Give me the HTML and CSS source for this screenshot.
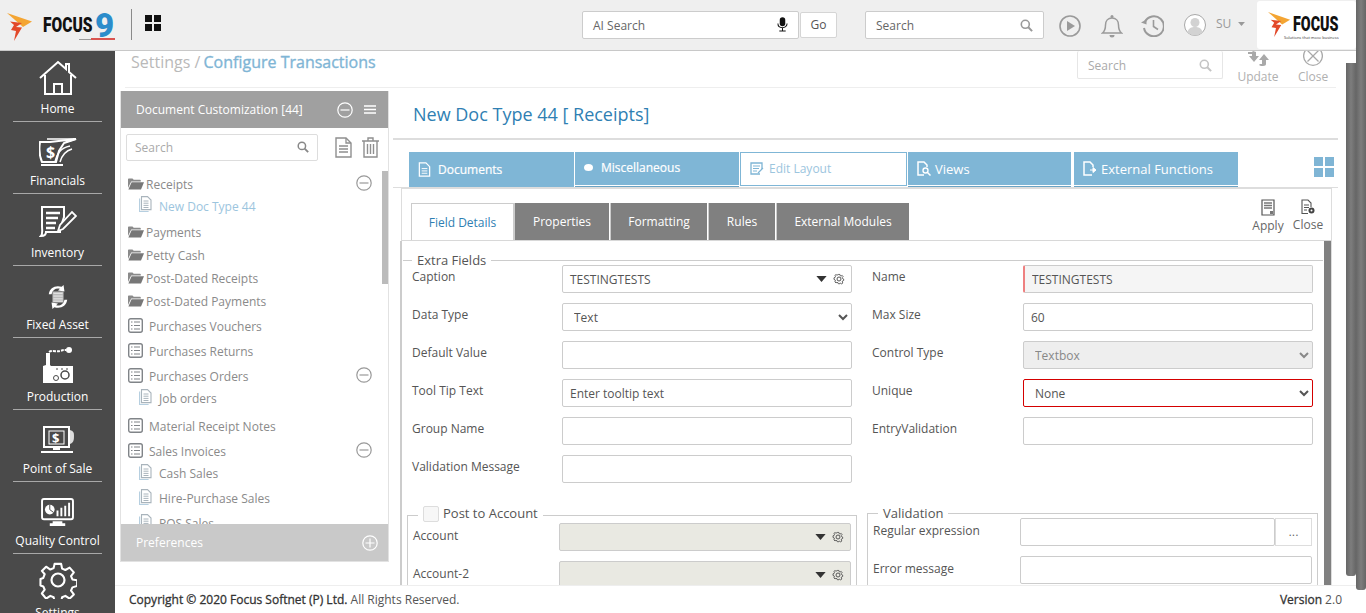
FILE: index.html
```html
<!DOCTYPE html>
<html lang="en">

<head>
  <meta charset="UTF-8">
  <meta name="viewport" content="width=device-width, initial-scale=1.0">
  <title>Configure Transactions</title>
  <link rel="stylesheet" href="styles.css">
</head>

<body>
  <svg class="sprites" width="0" height="0">
    <symbol id="i-gear" viewBox="0 0 12 12">
      <path d="M5 1h2l.3 1.4 1.2.5 1.200-.8 1.100 1.400-.9 1.100.3 1.300 1.300.6v1.700l-1.300.5-.4 1.200.8 1.200-1.400 1.200-1.100-.9-1.200.5L7 12H5l-.3-1.200-1.200-.5-1.100.8L1 9.800l.8-1.100-.5-1.200L0 7V5l1.300-.4.500-1.200-.8-1.100 1.400-1.200 1.100.8 1.200-.5z" transform="translate(1 .6) scale(.84)" fill="none" stroke="currentColor" stroke-width="1.100"/>
      <circle cx="6" cy="6" r="2" fill="none" stroke="currentColor"/>
    </symbol>
    <symbol id="i-folder" viewBox="0 0 16 12">
      <path d="M0 1.500C0 .8.500.5 1 .5h3.500l1.200 1.300h6.300c.5 0 .8.300.8.800V3.500H3.200L0 10z" fill="#8a8a8a"/>
      <path d="M3.600 4.300H16l-3 7.200H.4z" fill="#777"/>
    </symbol>
    <symbol id="i-list" viewBox="0 0 15 15">
      <rect x=".7" y=".7" width="13.600" height="13.600" rx="2" fill="none" stroke="#808488" stroke-width="1.400"/>
      <path d="M3 4h1.500M3 7.500h1.500M3 11h1.500M6 4h6M6 7.500h6M6 11h6" stroke="#808488" stroke-width="1.200"/>
    </symbol>
    <symbol id="i-page" viewBox="0 0 13 16">
      <path d="M.6 2.500v13h9" fill="none" stroke="#b6cfe0" stroke-width="1.200"/>
      <path d="M2.500.6h6l3.500 3.500v9.500H2.500z" fill="#fff" stroke="#a9b4bc" stroke-width="1.100"/>
      <path d="M4.500 5h5M4.500 7.200h5M4.500 9.400h5M4.500 11.500h5" stroke="#a9b4bc"/>
    </symbol>
    <symbol id="i-minus" viewBox="0 0 16 16">
      <circle cx="8" cy="8" r="7.200" fill="none" stroke="currentColor" stroke-width="1.200"/>
      <path d="M3.500 8h9" stroke="currentColor" stroke-width="1.200"/>
    </symbol>
    <symbol id="i-search" viewBox="0 0 13 13">
      <circle cx="5.300" cy="5.300" r="4" fill="none" stroke="currentColor" stroke-width="1.600"/>
      <path d="M8.300 8.300l3.800 3.800" stroke="currentColor" stroke-width="2"/>
    </symbol>
    <symbol id="i-caret" viewBox="0 0 12 7">
      <path d="M0 0h12L6 7z" fill="currentColor"/>
    </symbol>
  </svg>

  <div class="page">
    <div class="app">
      <header class="topbar">
        <div class="brand">
          <svg class="brand-flame" viewBox="0 0 26 28" width="26" height="28">
            <path d="M0 0l25 8.500-9 5.500z" fill="#f4a533"/>
            <path d="M3 8.500l12 1.500-6 4 6 .5L7 28l2-10-5-1 3-5z" fill="#e2492a"/>
          </svg>
          <span class="brand-word">FOCUS</span>
          <span class="brand-nine">9</span>
          <svg class="brand-tag" width="36" height="3"><rect x="0" y="1" width="12" height="1" fill="#999"/><rect x="12" y="0" width="24" height="2" fill="#d9534f"/></svg>
        </div>
        <span class="topbar-rule"></span>
        <svg class="apps-icon" viewBox="0 0 16 16" width="16" height="16">
          <path d="M0 0h7v7H0zM9 0h7v7H9zM0 9h7v7H0zM9 9h7v7H9z" fill="#111"/>
        </svg>

        <div class="ai-search">
          <span>AI Search</span>
          <svg viewBox="0 0 12 16" width="11" height="15">
            <rect x="3" y="0" width="6" height="10" rx="3" fill="#111"/>
            <path d="M1 7c0 6 10 6 10 0M6 12v2.500M2.500 15h7" fill="none" stroke="#111" stroke-width="1.100"/>
          </svg>
        </div>
        <button class="go-btn">Go</button>

        <div class="top-search">
          <span>Search</span>
          <svg width="13" height="13"><use href="#i-search"/></svg>
        </div>

        <svg class="top-icon top-play" viewBox="0 0 22 22" width="22" height="22">
          <circle cx="11" cy="11" r="10" fill="none" stroke="#9a9a9a" stroke-width="1.600"/>
          <path d="M8 6l8 5-8 5z" fill="#9a9a9a"/>
        </svg>
        <svg class="top-icon top-bell" viewBox="0 0 22 24" width="22" height="24">
          <path d="M1.500 19c2.500-2 3-4 3-8 0-4 2.500-7 6.500-7s6.500 3 6.500 7c0 4 .5 6 3 8z" fill="none" stroke="#9a9a9a" stroke-width="1.500"/>
          <circle cx="11" cy="2.500" r="1.500" fill="#9a9a9a"/>
          <path d="M8.500 21a2.500 2.500 0 0 0 5 0" fill="#9a9a9a"/>
        </svg>
        <svg class="top-icon top-history" viewBox="0 0 23 22" width="23" height="22">
          <path d="M3.800 7A10 10 0 1 1 3 13" fill="none" stroke="#9a9a9a" stroke-width="2"/>
          <path d="M0 7.500l5.500-3v5z" fill="#9a9a9a"/>
          <path d="M12.500 5v6.500l4.500 3" fill="none" stroke="#9a9a9a" stroke-width="1.600"/>
        </svg>
        <svg class="top-icon top-avatar" viewBox="0 0 22 22" width="22" height="22">
          <circle cx="11" cy="11" r="10.500" fill="#fff" stroke="#a8a8a8"/>
          <circle cx="11" cy="8.500" r="4.500" fill="#d2d2d2"/>
          <path d="M3.500 18c1-4 4-5 7.500-5s6.500 1 7.500 5a10 10 0 0 1-15 0z" fill="#d2d2d2"/>
        </svg>
        <span class="user-name">SU</span>
        <svg class="user-caret" width="7" height="4"><use href="#i-caret"/></svg>

        <div class="client-logo">
          <svg viewBox="0 0 26 28" width="23" height="25">
            <path d="M0 0l25 8.500-9 5.500z" fill="#f4a533"/>
            <path d="M3 8.500l12 1.500-6 4 6 .5L7 28l2-10-5-1 3-5z" fill="#e2492a"/>
          </svg>
          <div class="client-logo-text">
            <span class="client-word">FOCUS</span>
            <span class="client-tag">Solutions that move business</span>
          </div>
        </div>
      </header>

      <div class="app-body">
        <nav class="sidebar">
          <a class="nav-item">
            <svg viewBox="0 0 38 36" width="38" height="36"><path d="M1 18L19 2l8 7V4h3v8l7 6M6 15v19h9V24h8v10h9V15M15 34h8" fill="none" stroke="#fff" stroke-width="2"/></svg>
            <span>Home</span>
          </a>
          <a class="nav-item">
            <svg viewBox="0 0 38 30" width="38" height="30"><path d="M1 5h10l26-3-12 4-5 8-3 11H3C0 18 0 11 1 5z" fill="none" stroke="#fff" stroke-width="2"/><path d="M8 2l29 0-10 3M16 25c2-8 5-14 15-16M21 25c2-7 5-11 12-13" fill="none" stroke="#fff" stroke-width="1.500"/><path d="M2 28h22" stroke="#fff" stroke-width="2"/><text class="nav-dollar" x="7" y="21">$</text></svg>
            <span>Financials</span>
          </a>
          <a class="nav-item">
            <svg viewBox="0 0 38 34" width="38" height="34"><path d="M3 2h22v10l-4 12v3H7c0 3-2 4-5 4 2-2 1-6 1-10z" fill="none" stroke="#fff" stroke-width="2"/><path d="M7 8h14M7 13h12M7 18h10M7 23h9" stroke="#fff" stroke-width="2.400"/><path d="M19 26l2-6L33 7l4 4-13 13z" fill="#4a4a4a" stroke="#fff" stroke-width="1.800"/></svg>
            <span>Inventory</span>
          </a>
          <a class="nav-item">
            <svg viewBox="0 0 26 30" width="24" height="28"><path d="M3 12C4 5 10 2 17 4l2-2 1 7-7-1 2-2C11 5 7 7 6 12zM23 18c-1 7-7 10-14 8l-2 2-1-7 7 1-2 2c4 1 8-1 9-6z" fill="#fff"/><rect x="7" y="9" width="12" height="12" fill="#bbb"/><path d="M8 11h10M8 14h10M8 17h10M8 19.500h10" stroke="#eee"/></svg>
            <span>Fixed Asset</span>
          </a>
          <a class="nav-item">
            <svg viewBox="0 0 30 36" width="30" height="36"><path d="M3 6h4v14H3z" fill="#fff"/><path d="M6 5c3-2 8 0 11-1s4-1 6-1" fill="none" stroke="#fff" stroke-width="2" stroke-dasharray="3 1"/><circle cx="26" cy="3" r="3" fill="#fff"/><path d="M0 19l3-1h4l1 1h22v17H0z" fill="#fff"/><path d="M13 22h2M18 22h2M23 22h2" stroke="#4a4a4a"/><circle cx="22" cy="28" r="4" fill="none" stroke="#4a4a4a" stroke-width="1.500"/><circle cx="13" cy="31" r="2.500" fill="none" stroke="#4a4a4a"/></svg>
            <span>Production</span>
          </a>
          <a class="nav-item">
            <svg viewBox="0 0 36 30" width="36" height="30"><rect x="4" y="2" width="25" height="20" fill="none" stroke="#fff" stroke-width="2"/><path d="M30 5c3 1 4 2 4 6 0 5-1 7-4 8z" fill="#ddd"/><path d="M13 22h7v3h-7zM1 26h32v2H1z" fill="#fff"/><text class="nav-dollar nav-dollar--dark" x="12" y="18">$</text><rect x="9" y="6" width="15" height="13" fill="none" stroke="#fff"/></svg>
            <span>Point of Sale</span>
          </a>
          <a class="nav-item">
            <svg viewBox="0 0 34 30" width="33" height="29"><rect x="1" y="1" width="32" height="21" rx="2" fill="none" stroke="#fff" stroke-width="2"/><path d="M12 24h10v2h3v3H9v-3h3z" fill="#fff"/><circle cx="9" cy="12" r="5" fill="#fff"/><path d="M9 12V7M9 12l4 3" stroke="#4a4a4a"/><path d="M16 13h2v6h-2zM20 10h2v9h-2zM24 8h2v11h-2zM28 5h2v14h-2z" fill="#fff"/></svg>
            <span>Quality Control</span>
          </a>
          <a class="nav-item">
            <svg viewBox="0 0 38 38" width="38" height="38"><path d="M15.500 2h7l1 5 3.500 1.500 4.500-2.500 4.500 5-3 4 1.500 3.500 5 1v6l-5 1.500-1.500 3.500 3 4-4.500 4.500-4.500-3-3.500 1.500-1 5h-7l-1-5-3.500-1.500-4.500 3L2 33.500l3-4-1.500-3.500-3-1v-7l3-1L5 13 2 9.500 6.500 5l4.500 3 3.500-1.500z" transform="translate(1 1) scale(.94)" fill="none" stroke="#fff" stroke-width="2.200" stroke-linejoin="round"/><circle cx="19" cy="19" r="6.500" fill="none" stroke="#fff" stroke-width="2.200"/></svg>
            <span>Settings</span>
          </a>
        </nav>

        <div class="content">
          <div class="content-main">
            <div class="crumb-bar">
              <div class="crumbs">Settings / <b>Configure Transactions</b></div>
              <div class="crumb-search">
                <span>Search</span>
                <svg width="13" height="13"><use href="#i-search"/></svg>
              </div>
              <div class="crumb-action crumb-update">
                <svg viewBox="0 0 22 16" width="22" height="16"><path d="M1 1h4l1-1 3 1v4h3L7 11 2 5h3V3H1zM16 15c-1 0-3 0-4-1l1-1h2V9h-3l5-6 5 6h-3v4c0 1-1 2-3 2z" fill="#a9a9a9"/></svg>
                <span>Update</span>
              </div>
              <div class="crumb-action crumb-close">
                <svg viewBox="0 0 20 20" width="20" height="20"><circle cx="10" cy="6" r="9.400" fill="none" stroke="#a9a9a9" stroke-width="1.300"/><path d="M4.500 .5l11 11M15.500 .5l-11 11" stroke="#a9a9a9" stroke-width="1.300"/></svg>
                <span>Close</span>
              </div>
            </div>

            <div class="workspace">
              <aside class="tree-panel">
                <div class="tree-head">
                  <span>Document Customization [44]</span>
                  <svg class="tree-head-minus" width="16" height="16"><use href="#i-minus"/></svg>
                  <svg class="tree-head-menu" viewBox="0 0 12 9" width="12" height="9"><path d="M0 1h12M0 4.500h12M0 8h12" stroke="#fff" stroke-width="1.500"/></svg>
                </div>
                <div class="tree-tools">
                  <div class="tree-search">
                    <span>Search</span>
                    <svg width="12" height="12"><use href="#i-search"/></svg>
                  </div>
                  <svg class="tool-doc" viewBox="0 0 17 21" width="17" height="21"><path d="M1 1h10l5 5v14H1z" fill="none" stroke="#8f8f8f" stroke-width="1.400"/><path d="M11 1v5h5M4 9h9M4 12h9M4 15h9" fill="none" stroke="#8f8f8f" stroke-width="1.300"/></svg>
                  <svg class="tool-trash" viewBox="0 0 17 21" width="17" height="21"><path d="M0 4h17M6 4V1h5v3M2 4v16h13V4M5.500 7v10M8.500 7v10M11.500 7v10" fill="none" stroke="#8f8f8f" stroke-width="1.400"/></svg>
                </div>
                <div class="tree">
                  <div class="tree-thumb"></div>
                  <div class="row row-folder row-first"><svg width="16" height="12"><use href="#i-folder"/></svg>Receipts<svg class="row-minus" width="16" height="16"><use href="#i-minus"/></svg></div>
                  <div class="row row-sub row-current"><svg width="13" height="16"><use href="#i-page"/></svg>New Doc Type 44</div>
                  <div class="row row-folder"><svg width="16" height="12"><use href="#i-folder"/></svg>Payments</div>
                  <div class="row row-folder"><svg width="16" height="12"><use href="#i-folder"/></svg>Petty Cash</div>
                  <div class="row row-folder"><svg width="16" height="12"><use href="#i-folder"/></svg>Post-Dated Receipts</div>
                  <div class="row row-folder"><svg width="16" height="12"><use href="#i-folder"/></svg>Post-Dated Payments</div>
                  <div class="row row-doc row-doc-first"><svg width="15" height="15"><use href="#i-list"/></svg>Purchases Vouchers</div>
                  <div class="row row-doc"><svg width="15" height="15"><use href="#i-list"/></svg>Purchases Returns</div>
                  <div class="row row-doc"><svg width="15" height="15"><use href="#i-list"/></svg>Purchases Orders<svg class="row-minus" width="16" height="16"><use href="#i-minus"/></svg></div>
                  <div class="row row-sub"><svg width="13" height="16"><use href="#i-page"/></svg>Job orders</div>
                  <div class="row row-doc"><svg width="15" height="15"><use href="#i-list"/></svg>Material Receipt Notes</div>
                  <div class="row row-doc"><svg width="15" height="15"><use href="#i-list"/></svg>Sales Invoices<svg class="row-minus" width="16" height="16"><use href="#i-minus"/></svg></div>
                  <div class="row row-sub"><svg width="13" height="16"><use href="#i-page"/></svg>Cash Sales</div>
                  <div class="row row-sub"><svg width="13" height="16"><use href="#i-page"/></svg>Hire-Purchase Sales</div>
                  <div class="row row-sub"><svg width="13" height="16"><use href="#i-page"/></svg>POS Sales</div>
                </div>
                <div class="tree-foot">
                  <span>Preferences</span>
                  <svg viewBox="0 0 16 16" width="16" height="16"><circle cx="8" cy="8" r="7.200" fill="none" stroke="#fff" stroke-width="1.200"/><path d="M3.500 8h9M8 3.500v9" stroke="#fff" stroke-width="1.200"/></svg>
                </div>
              </aside>

              <section class="editor">
                <h1 class="doc-title">New Doc Type 44 [ Receipts]</h1>

                <div class="main-tabs">
                  <div class="main-tab main-tab--tall">
                    <svg viewBox="0 0 13 16" width="13" height="15"><path d="M1 1h7l4 4v10H1z" fill="none" stroke="#fff" stroke-width="1.300"/><path d="M3.500 7h6M3.500 9.500h6M3.500 12h6" stroke="#fff"/></svg>
                    Documents
                  </div>
                  <div class="main-tab main-tab--misc">
                    <svg viewBox="0 0 9 7" width="9" height="7"><ellipse cx="4.500" cy="3.500" rx="4.500" ry="3.500" fill="#fff"/></svg>
                    Miscellaneous
                  </div>
                  <div class="main-tab main-tab--open">
                    <svg viewBox="0 0 14 13" width="14" height="13"><path d="M10 12H1V1h11v6" fill="none" stroke="#7fb5d5" stroke-width="1.300"/><path d="M3 4h7M3 6.500h6M3 9h4M8 11l5-5" stroke="#7fb5d5" stroke-width="1.200"/></svg>
                    Edit Layout
                  </div>
                  <div class="main-tab main-tab--views">
                    <svg viewBox="0 0 14 15" width="14" height="15"><path d="M7 14H1V1h6l3 3v2" fill="none" stroke="#fff" stroke-width="1.500"/><circle cx="8.500" cy="9.500" r="2.500" fill="none" stroke="#fff" stroke-width="1.400"/><path d="M10.500 11.500l3 3" stroke="#fff" stroke-width="1.500"/></svg>
                    Views
                  </div>
                  <div class="main-tab main-tab--ext">
                    <svg viewBox="0 0 14 15" width="14" height="15"><path d="M9 14H1V1h6l3 3v2" fill="none" stroke="#fff" stroke-width="1.500"/><path d="M7 9h5M10 6.500L13 9l-3 2.500z" fill="#fff" stroke="#fff"/></svg>
                    External Functions
                  </div>
                  <svg class="layout-toggle" viewBox="0 0 20 20" width="20" height="20"><path d="M0 0h9v9H0zM11 0h9v9h-9zM0 11h9v9H0zM11 11h9v9h-9z" fill="#7fb5d5"/></svg>
                </div>

                <div class="card">
                  <div class="sub-bar">
                    <div class="sub-tab sub-tab--on">Field Details</div>
                    <div class="sub-tab sub-tab--props">Properties</div>
                    <div class="sub-tab sub-tab--format">Formatting</div>
                    <div class="sub-tab sub-tab--rules">Rules</div>
                    <div class="sub-tab sub-tab--modules">External Modules</div>
                    <div class="sub-action sub-apply">
                      <svg viewBox="0 0 14 17" width="14" height="17"><path d="M1 1h12v15H1z" fill="none" stroke="#555" stroke-width="1.200"/><path d="M3 4h8M3 6.500h8M3 9h8" stroke="#777" stroke-width="1.400"/><path d="M9 12h3v3H9z" fill="#777"/></svg>
                      <span>Apply</span>
                    </div>
                    <div class="sub-action sub-close">
                      <svg viewBox="0 0 14 16" width="14" height="16"><path d="M7 14.500H1V1h6l3 3v4" fill="none" stroke="#555" stroke-width="1.100"/><path d="M3 6h5M3 8.500h5M3 11h3" stroke="#555"/><circle cx="10.500" cy="11.500" r="3" fill="#444"/><circle cx="10.500" cy="11.500" r="1" fill="#fff"/></svg>
                      <span>Close</span>
                    </div>
                  </div>

                  <div class="card-body">
                    <div class="card-thumb"></div>
                    <fieldset class="extra-fields">
                      <legend>Extra Fields</legend>
                      <div class="field-grid">
                        <label>Caption</label>
                        <div class="combo">
                          <span>TESTINGTESTS</span>
                          <svg class="combo-caret" width="11" height="6"><use href="#i-caret"/></svg>
                          <svg class="combo-gear" width="12" height="12"><use href="#i-gear"/></svg>
                        </div>
                        <label>Name</label>
                        <input class="ctl ctl-locked" value="TESTINGTESTS" readonly>

                        <label>Data Type</label>
                        <select class="ctl"><option>Text</option></select>
                        <label>Max Size</label>
                        <input class="ctl" value="60">

                        <label>Default Value</label>
                        <input class="ctl">
                        <label>Control Type</label>
                        <select class="ctl ctl-off" disabled><option>Textbox</option></select>

                        <label>Tool Tip Text</label>
                        <input class="ctl" value="Enter tooltip text">
                        <label>Unique</label>
                        <select class="ctl ctl-alert"><option>None</option></select>

                        <label>Group Name</label>
                        <input class="ctl">
                        <label>EntryValidation</label>
                        <input class="ctl">

                        <label>Validation Message</label>
                        <input class="ctl">
                      </div>
                    </fieldset>

                    <div class="lower-sets">
                      <fieldset class="post-set">
                        <legend><span class="fake-check"></span><span class="post-title">Post to Account</span></legend>
                        <div class="lower-row lower-row--first">
                          <label>Account</label>
                          <div class="combo combo-off">
                            <svg class="combo-caret" width="11" height="6"><use href="#i-caret"/></svg>
                            <svg class="combo-gear" width="12" height="12"><use href="#i-gear"/></svg>
                          </div>
                        </div>
                        <div class="lower-row">
                          <label>Account-2</label>
                          <div class="combo combo-off">
                            <svg class="combo-caret" width="11" height="6"><use href="#i-caret"/></svg>
                            <svg class="combo-gear" width="12" height="12"><use href="#i-gear"/></svg>
                          </div>
                        </div>
                      </fieldset>
                      <fieldset class="valid-set">
                        <legend>Validation</legend>
                        <div class="valid-row">
                          <label>Regular expression</label>
                          <input class="ctl">
                          <button class="dots-btn">...</button>
                        </div>
                        <div class="valid-row">
                          <label>Error message</label>
                          <input class="ctl">
                        </div>
                      </fieldset>
                    </div>
                  </div>
                </div>
              </section>
            </div>
          </div>

          <footer class="footer">
            <div><b>Copyright © 2020 Focus Softnet (P) Ltd.</b> All Rights Reserved.</div>
            <div><b>Version</b> 2.0</div>
          </footer>
        </div>

        <div class="inner-scroll"><span></span></div>
      </div>
    </div>

    <div class="outer-scroll"><span></span></div>
  </div>
</body>

</html>
```

FILE: styles.css
```css
* {
  box-sizing: border-box;
}

html,
body {
  height: 613px;
  margin: 0;
  overflow: hidden;
}

body {
  background: #fff;
  color: #555;
  font-family: "Open Sans", sans-serif;
  font-size: 12px;
}

.sprites {
  display: block;
  height: 0;
}

.page {
  display: flex;
  height: 613px;
  width: 1366px;
}

.app {
  display: flex;
  flex-direction: column;
  height: 613px;
  width: 1356px;
}

.outer-scroll,
.inner-scroll {
  background: #fff;
  display: flex;
  flex-direction: column;
  flex: none;
  width: 10px;
}

.outer-scroll span {
  background: linear-gradient(90deg, #666, #7d7d7d 50%, #666);
  border-radius: 0 0 3px 3px;
  display: block;
  height: 590px;
}

.inner-scroll {
  height: 525px;
  padding-top: 12px;
}

.inner-scroll span {
  background: linear-gradient(90deg, #666, #7d7d7d 50%, #666);
  border-radius: 0 0 3px 3px;
  display: block;
  flex: 1;
}

/* top bar */
.topbar {
  align-items: center;
  background: #efefef;
  border-bottom: 1px solid #c8c8c8;
  display: flex;
  flex: none;
  height: 51px;
  position: relative;
}

.brand {
  align-items: center;
  display: flex;
  flex: none;
  height: 50px;
  padding-left: 7px;
  position: relative;
  width: 131px;
}

.brand-flame {
  flex: none;
  margin-top: 3px;
}

.brand-word {
  color: #111;
  display: inline-block;
  font-family: Roboto, sans-serif;
  font-size: 21px;
  font-weight: 900;
  margin-left: 10px;
  transform: scaleX(.74);
  transform-origin: left center;
  width: 53px;
}

.brand-nine {
  color: #2b8ccb;
  font-family: Roboto, sans-serif;
  font-size: 33px;
  font-weight: 900;
  line-height: 30px;
  margin-top: 1px;
  margin-left: -1px;
}

.brand-tag {
  bottom: 9px;
  left: 79px;
  position: absolute;
}

.topbar-rule {
  background: #8a8a8a;
  flex: none;
  height: 31px;
  margin-top: -1px;
  width: 1px;
}

.apps-icon {
  flex: none;
  margin-left: 13px;
  margin-top: -5px;
}

.ai-search,
.top-search {
  align-items: center;
  background: #fff;
  border: 1px solid #ccc;
  border-radius: 2px;
  color: #666;
  display: flex;
  flex: none;
  font-size: 12px;
  height: 28px;
  justify-content: space-between;
  margin-top: -1px;
}

.ai-search span,
.top-search span {
  margin-top: 2px;
}

.ai-search {
  margin-left: 421px;
  padding: 0 10px 0 10px;
  width: 217px;
}

.go-btn {
  background: #fff;
  border: 1px solid #d5d5d5;
  border-radius: 2px;
  color: #555;
  flex: none;
  font-family: inherit;
  font-size: 12px;
  height: 26px;
  margin-left: 1px;
  margin-top: -1px;
  padding: 0;
  width: 37px;
}

.top-search {
  margin-left: 28px;
  padding: 0 10px;
  width: 179px;
}

.top-search svg {
  color: #999;
  margin-top: 2px;
}

.top-icon {
  flex: none;
  margin-top: 1px;
}

.top-play {
  margin-left: 15px;
}

.top-bell {
  margin-left: 20px;
}

.top-history {
  margin-left: 18px;
}

.top-avatar {
  margin-left: 20px;
  margin-top: -1px;
}

.user-name {
  color: #999;
  flex: none;
  margin-left: 10px;
  margin-top: -4px;
}

.user-caret {
  color: #999;
  flex: none;
  margin-left: 7px;
  margin-top: -2px;
}

.client-logo {
  align-items: center;
  background: #fff;
  border-radius: 3px;
  display: flex;
  flex: none;
  height: 48px;
  margin-left: auto;
  padding: 0 0 0 11px;
  width: 99px;
}

.client-logo svg {
  flex: none;
  margin-top: -2px;
}

.client-logo-text {
  display: flex;
  flex-direction: column;
  margin-left: 2px;
  margin-top: 2px;
  min-width: 0;
}

.client-word {
  color: #111;
  display: inline-block;
  font-family: Roboto, sans-serif;
  font-size: 21px;
  font-weight: 900;
  line-height: 22px;
  transform: scaleX(.68);
  transform-origin: left center;
  width: 50px;
}

.client-tag {
  color: #333;
  font-size: 4px;
  line-height: 5px;
  margin-left: -9px;
  white-space: nowrap;
}

/* left nav */
.app-body {
  display: flex;
  flex: 1;
  min-height: 0;
}

.sidebar {
  background: #4a4a4a;
  flex: none;
  height: 562px;
  overflow: hidden;
  width: 115px;
}

.nav-item {
  align-items: center;
  color: #fff;
  display: flex;
  flex-direction: column;
  height: 72px;
  justify-content: flex-end;
  margin: 0 13px;
  padding-bottom: 5px;
  position: relative;
  white-space: nowrap;
}

.nav-item::after {
  background: #a8a8a8;
  bottom: 0;
  content: "";
  height: 1px;
  left: 0;
  position: absolute;
  right: 0;
}

.nav-item span {
  line-height: 17px;
}

.nav-item svg {
  flex: none;
  margin-bottom: 5px;
}

.nav-item:first-child {
  height: 71px;
}

.nav-item:first-child svg {
  margin-bottom: 4px;
}

.nav-item:last-child::after {
  display: none;
}

.nav-dollar {
  fill: #fff;
  font-family: "Open Sans", sans-serif;
  font-size: 16px;
  font-weight: 700;
}

.nav-dollar--dark {
  font-size: 13px;
}

/* content */
.content {
  display: flex;
  flex: 1;
  flex-direction: column;
  min-width: 0;
}

.content-main {
  flex: none;
  height: 534px;
  overflow: hidden;
}

.crumb-bar {
  align-items: flex-start;
  border-bottom: 1px solid #eee;
  display: flex;
  height: 37px;
  margin: 0 10px;
  position: relative;
}

.crumbs {
  color: #b9b9b9;
  font-size: 16px;
  line-height: 22px;
  margin-left: 6px;
  width: 946px;
}

.crumbs b {
  color: #7fb5d5;
  font-weight: 500;
  margin-left: -1px;
  -webkit-text-stroke: .35px #7fb5d5;
}

.crumb-search {
  align-items: center;
  border: 1px solid #e6e6e6;
  border-radius: 2px;
  border-top: 0;
  color: #aaa;
  display: flex;
  flex: none;
  height: 28px;
  justify-content: space-between;
  padding: 2px 10px 0;
  width: 146px;
}

.crumb-search svg {
  color: #c4c4c4;
}

.crumb-action {
  color: #b0b0b0;
  display: flex;
  flex: none;
  flex-direction: column;
  align-items: center;
  height: 36px;
}

.crumb-action span {
  line-height: 16px;
}

.crumb-action svg {
  margin-bottom: 2px;
  flex: none;
}

.crumb-update {
  margin-left: 15px;
  width: 40px;
}

.crumb-close {
  margin-left: 20px;
  margin-top: -1px;
  width: 30px;
}

.crumb-close svg {
  margin-bottom: -1px;
}

.workspace {
  display: flex;
  padding: 3px 0 0 5px;
}

/* tree */
.tree-panel {
  border: 1px solid #e2e2e2;
  border-top: 0;
  flex: none;
  height: 471px;
  width: 269px;
}

.tree-head,
.tree-foot {
  align-items: center;
  color: #fff;
  display: flex;
  height: 37px;
  padding-left: 15px;
}

.tree-head {
  background: #a0a0a0;
}

.tree-foot {
  background: #c9c9c9;
  justify-content: space-between;
  padding-right: 10px;
}

.tree-head-minus {
  color: #fff;
  margin-left: 34px;
}

.tree-head-menu {
  margin-left: 11px;
}

.tree-tools {
  align-items: center;
  display: flex;
  height: 43px;
  padding: 0 0 5px 5px;
}

.tree-search {
  align-items: center;
  border: 1px solid #ddd;
  border-radius: 2px;
  color: #aaa;
  display: flex;
  height: 27px;
  justify-content: space-between;
  padding: 0 8px;
  width: 192px;
}

.tree-search svg {
  color: #888;
}

.tool-doc {
  margin-left: 17px;
}

.tool-trash {
  margin-left: 10px;
}

.tree {
  color: #8a8a8a;
  height: 353px;
  overflow: hidden;
  position: relative;
}

.tree-thumb {
  background: #bbb;
  height: 113px;
  position: absolute;
  right: 0;
  top: 0;
  width: 6px;
}

.row {
  align-items: center;
  display: flex;
  padding-left: 7px;
  position: relative;
  white-space: nowrap;
}

.row svg {
  flex: none;
}

.row-folder {
  height: 22px;
  margin-bottom: 1px;
}

.row-folder svg {
  margin-right: 2px;
}

.row-first {
  margin-bottom: 0;
  margin-top: 2px;
}

.row-doc {
  height: 25px;
}

.row-doc svg {
  margin-right: 6px;
  margin-top: -3px;
}

.row-doc-first {
  margin-top: 2px;
}

.row-sub {
  align-items: flex-start;
  height: 25px;
  line-height: 19px;
  padding-left: 18px;
}

.row-sub svg {
  margin-right: 7px;
}

.row-current {
  color: #9cc5de;
  height: 26px;
  line-height: 24px;
  margin-bottom: 0;
}

.row-current svg {
  margin-top: 1px;
}

.row-minus.row-minus {
  color: #999;
  margin: 0;
  position: absolute;
  right: 16px;
  top: 3px;
}

.row-first .row-minus {
  top: 2px;
}

/* editor */
.editor {
  flex: 1;
  margin-left: 4px;
  min-width: 0;
}

.doc-title {
  border-bottom: 2px solid #ddd;
  color: #2f7fb3;
  font-size: 18px;
  font-weight: 400;
  height: 49px;
  line-height: 46px;
  margin: 0 8px 0 0;
  padding-left: 20px;
}

.main-tabs {
  align-items: flex-start;
  border-bottom: 1px solid #ddd;
  display: flex;
  height: 36px;
  margin: 12px 8px 0 0;
  padding-left: 16px;
  position: relative;
}

.main-tab {
  align-items: center;
  background: #7fb6d6;
  border-bottom: 1px solid #fff;
  box-shadow: 0 1px 0 #6aa3c4;
  color: #fff;
  display: flex;
  flex: none;
  font-size: 13px;
  gap: 7px;
  height: 34px;
  padding-left: 9px;
  width: 164px;
}

.main-tab--tall {
  border-bottom: 0;
  box-shadow: none;
  font-size: 12px;
  gap: 7px;
  height: 35px;
  width: 165px;
  -webkit-text-stroke: .2px #fff;
}

.main-tab--tall svg {
  margin-top: -1px;
}

.main-tab--misc {
  font-size: 12px;
  gap: 8px;
  margin-left: 1px;
  padding-bottom: 2px;
  -webkit-text-stroke: .2px #fff;
}

.main-tab--open {
  background: #fff;
  border: 1px solid #7fb6d6;
  box-shadow: none;
  color: #9cc5de;
  font-size: 12px;
  gap: 5px;
  margin-left: 1px;
  padding-bottom: 2px;
  width: 167px;
}

.main-tab--views {
  gap: 4px;
  margin-left: 1px;
  width: 163px;
}

.main-tab--ext {
  gap: 4px;
  margin-left: 3px;
}

.layout-toggle {
  margin-left: auto;
  margin-right: 4px;
  margin-top: 5px;
}

.card {
  border: 1px solid #ddd;
  border-left: 0;
  margin-left: 8px;
  margin-right: 14px;
}

.sub-bar {
  align-items: flex-end;
  border-bottom: 1px solid #d8d8d8;
  border-left: 1px solid #ddd;
  display: flex;
  height: 52px;
  padding-left: 9px;
  position: relative;
}

.sub-tab {
  align-items: center;
  background: #808080;
  color: #fff;
  display: flex;
  flex: none;
  height: 37px;
  justify-content: center;
  margin-right: 1px;
  border-left: 1px solid #ccc;
}

.sub-tab--on {
  background: #fff;
  border: 1px solid #ccc;
  border-bottom: 0;
  color: #2f7fb3;
  margin-right: 0;
  width: 103px;
}

.sub-tab--props {
  width: 95px;
}

.sub-tab--format {
  width: 97px;
}

.sub-tab--rules {
  width: 67px;
}

.sub-tab--modules {
  margin-right: 0;
  width: 133px;
}

.sub-action {
  align-items: center;
  color: #666;
  display: flex;
  flex: none;
  flex-direction: column;
  height: 43px;
  margin-bottom: -2px;
}

.sub-action span {
  line-height: 16px;
}

.sub-action svg {
  margin-bottom: 2px;
  flex: none;
}

.sub-apply {
  margin-left: 342px;
  width: 34px;
}

.sub-close {
  margin-left: 7px;
  width: 32px;
}

.card-body {
  border-left: 2px solid #ccc;
  margin-left: -1px;
  padding-left: 1px;
  padding-top: 12px;
  position: relative;
}

.card-thumb {
  background: #808080;
  bottom: 0;
  position: absolute;
  right: 0;
  top: 0;
  width: 7px;
}

fieldset {
  border: 0;
  margin: 0;
  min-width: 0;
  padding: 0;
}

legend {
  color: #555;
  font-size: 13px;
  line-height: 14px;
  padding: 0 5px;
}

.extra-fields {
  border-top: 1px solid #ccc;
  height: 253px;
  margin-right: 8px;
}

.extra-fields legend {
  margin-left: 9px;
}

.field-grid {
  align-items: start;
  display: grid;
  gap: 10px 0;
  grid-auto-rows: 28px;
  grid-template-columns: 150px 290px 20px 151px 290px;
  padding: 0 0 0 9px;
  margin-top: -2px;
}

.field-grid label {
  line-height: 16px;
  padding-top: 4px;
}

.field-grid label:nth-of-type(odd) {
  grid-column: 1;
}

.field-grid label:nth-of-type(even) {
  grid-column: 4;
}

.ctl {
  background: #fff;
  border: 1px solid #ccc;
  border-radius: 2px;
  color: #555;
  font-family: inherit;
  font-size: 12px;
  height: 28px;
  padding: 0 7px;
  width: 100%;
}

select.ctl {
  padding: 0 7px;
}

.ctl-locked {
  background: #f5f5f5;
  border-left: 2px solid #ee8080;
}

.ctl-off {
  background: #eee;
  color: #888;
  opacity: 1;
}

.ctl-alert {
  border-color: #d40000;
}

.combo {
  align-items: center;
  background: #fff;
  border: 1px solid #ccc;
  border-radius: 2px;
  display: flex;
  height: 28px;
  padding: 0 6px 0 7px;
}

.combo span {
  flex: 1;
}

.combo-caret {
  color: #333;
  margin-left: auto;
}

.combo-gear {
  color: #555;
  margin-left: 6px;
}

.combo-off {
  background: #e9e9e2;
}

.lower-sets {
  align-items: flex-start;
  display: flex;
  gap: 10px;
  padding-left: 4px;
}

.post-set,
.valid-set {
  border: 1px solid #ccc;
  border-bottom: 0;
  flex: none;
  height: 84px;
}

.post-set {
  width: 450px;
}

.valid-set {
  width: 451px;
}

.post-set legend {
  display: flex;
  height: 18px;
  margin-left: 10px;
}

.post-title {
  line-height: 14px;
}

.valid-set legend {
  margin-left: 10px;
}

.fake-check {
  background: #f7f7f7;
  border: 1px solid #ddd;
  border-radius: 2px;
  display: block;
  height: 16px;
  margin-right: 4px;
  width: 16px;
}

.lower-row {
  display: flex;
  height: 28px;
  margin: 0 5px 10px 5px;
}

.lower-row--first {
  margin-top: -1px;
}

.lower-row label {
  flex: none;
  line-height: 16px;
  padding-top: 5px;
  width: 146px;
}

.lower-row .combo {
  flex: none;
  width: 292px;
}

.valid-row {
  display: flex;
  height: 28px;
  margin: 0 5px 10px 5px;
}

.valid-row:first-of-type {
  margin-top: -2px;
}

.valid-row label {
  flex: none;
  line-height: 16px;
  padding-top: 5px;
  width: 147px;
}

.valid-row .ctl {
  flex: 1;
  min-width: 0;
}

.dots-btn {
  background: #fff;
  border: 1px solid #ddd;
  color: #666;
  flex: none;
  font-size: 12px;
  padding: 0;
  width: 37px;
}

/* footer */
.footer {
  align-items: center;
  background: #fff;
  border-top: 1px solid #eee;
  color: #555;
  display: flex;
  flex: none;
  height: 28px;
  justify-content: space-between;
  padding: 0 14px 0 14px;
  position: relative;
  margin-right: -10px;
}

.footer b {
  color: #333;
  font-weight: 500;
  -webkit-text-stroke: .3px #333;
}
```
